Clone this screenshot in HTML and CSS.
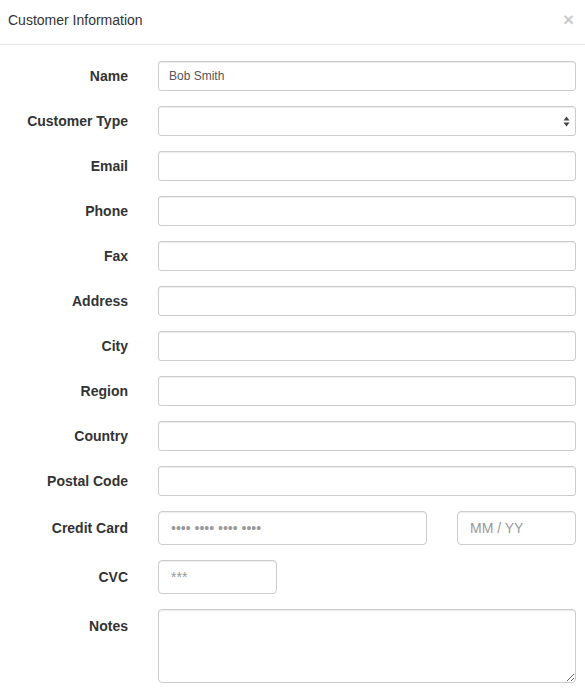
FILE: index.html
```html
<!DOCTYPE html>
<html>
<head>
<meta charset="utf-8">
<link rel="stylesheet" href="styles.css">
</head>
<body>
<div class="modal">
  <div class="modal-header">
    <h4 class="modal-title">Customer Information</h4>
    <span class="close">×</span>
  </div>
  <form class="modal-body">
    <div class="row sm"><label>Name</label><div class="field"><input class="ctl" type="text" value="Bob Smith"></div></div>
    <div class="row sm"><label>Customer Type</label><div class="field"><div class="ctl select"><svg class="arrows" width="7" height="11" viewBox="0 0 7 11"><path d="M3.5 0.5 L6.5 4.5 L0.5 4.5 Z" fill="#444"/><path d="M0.5 6.5 L6.5 6.5 L3.5 10.5 Z" fill="#444"/></svg></div></div></div>
    <div class="row sm"><label>Email</label><div class="field"><input class="ctl" type="text"></div></div>
    <div class="row sm"><label>Phone</label><div class="field"><input class="ctl" type="text"></div></div>
    <div class="row sm"><label>Fax</label><div class="field"><input class="ctl" type="text"></div></div>
    <div class="row sm"><label>Address</label><div class="field"><input class="ctl" type="text"></div></div>
    <div class="row sm"><label>City</label><div class="field"><input class="ctl" type="text"></div></div>
    <div class="row sm"><label>Region</label><div class="field"><input class="ctl" type="text"></div></div>
    <div class="row sm"><label>Country</label><div class="field"><input class="ctl" type="text"></div></div>
    <div class="row sm"><label>Postal Code</label><div class="field"><input class="ctl" type="text"></div></div>
    <div class="row lg"><label>Credit Card</label><div class="field split"><input class="ctl lgc" type="text" placeholder="•••• •••• •••• ••••"><input class="ctl lgc" type="text" placeholder="MM / YY"></div></div>
    <div class="row lg"><label>CVC</label><div class="field"><input class="ctl lgc cvc" type="text" placeholder="***"></div></div>
    <div class="row notes"><label>Notes</label><div class="field"><textarea class="ctl area"></textarea></div></div>
  </form>
</div>
</body>
</html>
```
FILE: styles.css
```css
html, body {
  margin: 0;
  padding: 0;
  background: #fff;
  font-family: "Liberation Sans", Arial, sans-serif;
  color: #333;
}
.modal {
  width: 585px;
}
.modal-header {
  display: flex;
  justify-content: space-between;
  align-items: center;
  padding: 10px 11px 14px 8px;
  border-bottom: 1px solid #e5e5e5;
}
.modal-title {
  margin: 0;
  font-size: 14px;
  font-weight: normal;
  line-height: 20px;
  color: #333;
}
.close {
  font-size: 19px;
  font-weight: bold;
  line-height: 20px;
  color: #000;
  opacity: 0.2;
}
.modal-body {
  display: flex;
  flex-direction: column;
  gap: 15px;
  padding: 16px 9px 10px 0;
  margin: 0;
}
.row {
  display: flex;
  align-items: flex-start;
  gap: 30px;
}
.row label {
  width: 128px;
  text-align: right;
  font-weight: bold;
  font-size: 14px;
  flex: none;
}
.row.sm label { line-height: 31px; height: 30px; }
.row.lg label { line-height: 34px; }
.row.notes label { line-height: 20px; padding-top: 7px; }
.field {
  flex: 1;
  min-width: 0;
}
.ctl {
  display: block;
  box-sizing: border-box;
  width: 100%;
  height: 30px;
  margin: 0;
  padding: 5px 10px;
  font-family: "Liberation Sans", Arial, sans-serif;
  font-size: 12px;
  color: #555;
  background: #fff;
  border: 1px solid #ccc;
  border-radius: 3px;
  box-shadow: inset 0 1px 1px rgba(0,0,0,.075);
  outline: none;
}
.select {
  position: relative;
}
.arrows {
  position: absolute;
  right: 5px;
  top: 9px;
}
.split {
  display: grid;
  grid-template-columns: 269px 119px;
  column-gap: 30px;
}
.lgc {
  height: 34px;
  padding: 6px 12px;
  font-size: 14px;
  border-radius: 4px;
}
.cvc {
  width: 119px;
}
.lgc::placeholder {
  color: #999;
}
.area {
  height: 74px;
  resize: vertical;
  border-radius: 4px;
}
```
